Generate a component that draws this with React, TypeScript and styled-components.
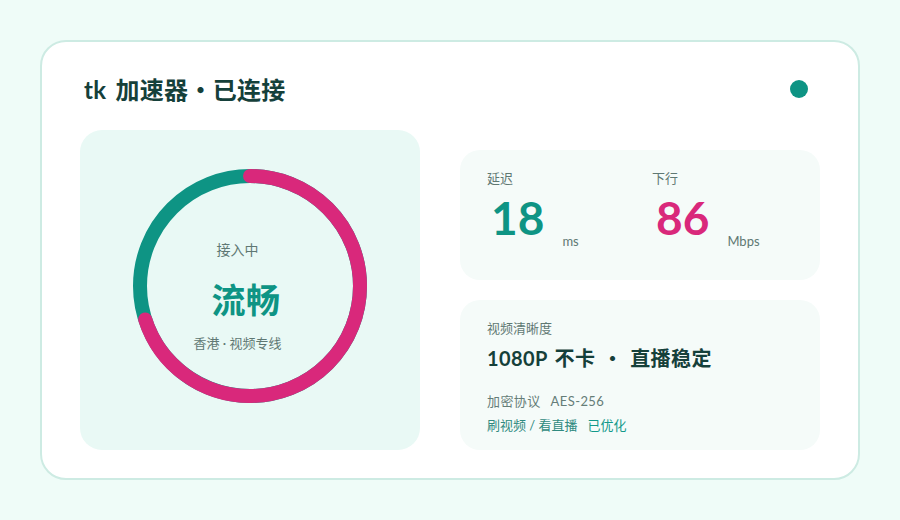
import React from "react";
import styled, { createGlobalStyle } from "styled-components";

const GlobalStyle = createGlobalStyle`
  html, body { margin: 0; padding: 0; }
  body {
    background: #effcf8;
    font-family: "Lato", "Noto Sans CJK SC", sans-serif;
  }
  * { box-sizing: border-box; }
`;

const Page = styled.div`
  width: 900px;
  height: 520px;
  padding: 40px;
`;

const Card = styled.div`
  width: 820px;
  height: 440px;
  background: #ffffff;
  border: 2px solid #cdebe3;
  border-radius: 26px;
  padding: 30px 38px 28px 38px;
  display: flex;
  flex-direction: column;
`;

const Header = styled.div`
  height: 34px;
  display: flex;
  align-items: center;
  justify-content: space-between;
  padding: 0 12px 0 4px;
`;

const Title = styled.h1`
  margin: 0;
  font-size: 24px;
  line-height: 34px;
  font-weight: 700;
  color: #15403a;
  letter-spacing: 0.3px;
  word-spacing: 3px;
  white-space: pre;
`;

const Sep = styled.span`
  font-family: "Noto Sans CJK SC", sans-serif;
`;

const StatusDot = styled.span`
  width: 18px;
  height: 18px;
  border-radius: 50%;
  background: #0e9484;
`;

const Body = styled.div`
  margin-top: 24px;
  display: grid;
  grid-template-columns: 340px 360px;
  column-gap: 40px;
  height: 320px;
`;

const RingPanel = styled.div`
  background: #e9f9f5;
  border-radius: 22px;
  display: flex;
  align-items: center;
  justify-content: center;
  padding-bottom: 8px;
`;

const RingWrap = styled.div`
  position: relative;
  width: 240px;
  height: 240px;
`;

const RingText = styled.div`
  position: absolute;
  inset: 0;
  display: flex;
  flex-direction: column;
  align-items: center;
  justify-content: center;
  padding: 20px 25px 0 0;
`;

const RingLabel = styled.div<{ $gap?: number }>`
  font-size: ${(p) => (p.$gap !== undefined ? 14 : 13)}px;
  line-height: ${(p) => (p.$gap !== undefined ? 20 : 18)}px;
  color: #5f7873;
  margin-bottom: ${(p) => p.$gap ?? 0}px;
  white-space: nowrap;
`;

const RingValue = styled.div`
  font-size: 34px;
  line-height: 44px;
  font-weight: 700;
  color: #0e9484;
  margin: 0 0 12px 17px;
  letter-spacing: 0.5px;
`;

const Side = styled.div`
  padding-top: 20px;
  display: flex;
  flex-direction: column;
  gap: 20px;
`;

const InfoCard = styled.div<{ $h: number }>`
  height: ${(p) => p.$h}px;
  background: #f5fbf9;
  border-radius: 20px;
  padding: 19px 27px 0 27px;
`;

const Stats = styled.div`
  display: grid;
  grid-template-columns: 1fr 1fr;
  column-gap: 24px;
`;

const Label = styled.div`
  font-size: 13px;
  line-height: 18px;
  color: #5f7873;
`;

const StatRow = styled.div`
  margin-top: 8px;
  display: flex;
  align-items: flex-end;
  padding-left: 4px;
`;

const Num = styled.span<{ $color: string }>`
  font-size: 46px;
  line-height: 46px;
  font-weight: 700;
  color: ${(p) => p.$color};
`;

const Unit = styled.span`
  font-size: 13px;
  line-height: 13px;
  color: #5f7873;
  margin: 0 0 -7px 18px;
`;

const Headline = styled.div`
  margin-top: 7px;
  font-size: 20px;
  line-height: 28px;
  font-weight: 700;
  color: #15403a;
  letter-spacing: 0.4px;
  word-spacing: 2px;
  white-space: pre;
`;

const Lines = styled.div`
  margin-top: 20px;
  display: flex;
  flex-direction: column;
  gap: 6px;
`;

const Line = styled.div`
  display: flex;
  gap: 10px;
  font-size: 13px;
  line-height: 18px;
`;

const Part = styled.span<{ $tone: "grey" | "teal" | "bright" }>`
  color: ${(p) =>
    p.$tone === "grey" ? "#657d78" : p.$tone === "teal" ? "#2f8a80" : "#12998a"};
  letter-spacing: ${(p) => (p.$tone === "grey" ? "0.4px" : "0")};
`;

const R = 110;
const C = 2 * Math.PI * R;

function Ring() {
  const arc = C * 0.7;
  return (
    <svg width="240" height="240" viewBox="0 0 240 240">
      <circle cx="120" cy="120" r={R} fill="none" stroke="#0e9484" strokeWidth="14" />
      <circle
        cx="120"
        cy="120"
        r={R}
        fill="none"
        stroke="#d9287b"
        strokeWidth="14"
        strokeLinecap="round"
        strokeDasharray={`${arc} ${C}`}
        transform="rotate(-90 120 120)"
      />
    </svg>
  );
}

export default function App() {
  return (
    <>
      <GlobalStyle />
      <Page>
        <Card>
          <Header>
            <Title>
              tk 加速器<Sep>•</Sep>已连接
            </Title>
            <StatusDot />
          </Header>
          <Body>
            <RingPanel>
              <RingWrap>
                <Ring />
                <RingText>
                  <RingLabel $gap={18}>接入中</RingLabel>
                  <RingValue>流畅</RingValue>
                  <RingLabel>香港 · 视频专线</RingLabel>
                </RingText>
              </RingWrap>
            </RingPanel>
            <Side>
              <InfoCard $h={130}>
                <Stats>
                  <div>
                    <Label>延迟</Label>
                    <StatRow>
                      <Num $color="#0e9484">18</Num>
                      <Unit>ms</Unit>
                    </StatRow>
                  </div>
                  <div>
                    <Label>下行</Label>
                    <StatRow>
                      <Num $color="#d9287b">86</Num>
                      <Unit>Mbps</Unit>
                    </StatRow>
                  </div>
                </Stats>
              </InfoCard>
              <InfoCard $h={150}>
                <Label>视频清晰度</Label>
                <Headline>
                  1080P 不卡 <Sep>•</Sep> 直播稳定
                </Headline>
                <Lines>
                  <Line>
                    <Part $tone="grey">加密协议</Part>
                    <Part $tone="grey">AES-256</Part>
                  </Line>
                  <Line>
                    <Part $tone="teal">刷视频 / 看直播</Part>
                    <Part $tone="bright">已优化</Part>
                  </Line>
                </Lines>
              </InfoCard>
            </Side>
          </Body>
        </Card>
      </Page>
    </>
  );
}
